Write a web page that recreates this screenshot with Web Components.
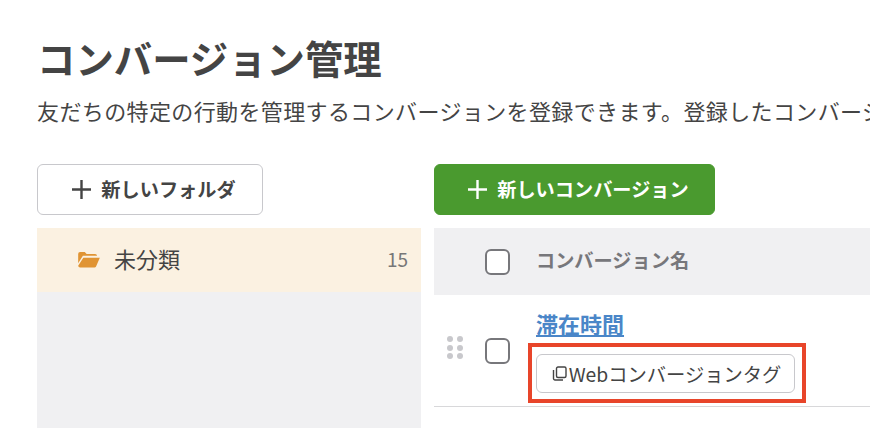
<!DOCTYPE html>
<html lang="ja">
<head>
<meta charset="utf-8">
<style>
  html, body { margin: 0; height: 100%; overflow: hidden; background: #fff; }
  body { font-family: "Noto Sans CJK JP", "Noto Sans", sans-serif; color: #444; }
</style>
</head>
<body>
<conv-page>
  <page-head slot="head" heading="コンバージョン管理">友だちの特定の行動を管理するコンバージョンを登録できます。登録したコンバージョンは友だちの行動の分析に利用できます。</page-head>
  <folder-panel slot="left"></folder-panel>
  <conv-panel slot="right"></conv-panel>
</conv-page>

<script>
class ConvPage extends HTMLElement {
  constructor() {
    super();
    this.attachShadow({ mode: 'open' });
    this.shadowRoot.innerHTML = `
      <style>
        :host { display: block; width: 870px; height: 428px; overflow: hidden; box-sizing: border-box; padding: 32px 0 0 37px; }
        .cols { display: flex; gap: 13px; margin-top: 41px; width: 900px; }
        .left { flex: 0 0 384px; }
        .right { flex: 1 1 auto; }
      </style>
      <slot name="head"></slot>
      <div class="cols">
        <div class="left"><slot name="left"></slot></div>
        <div class="right"><slot name="right"></slot></div>
      </div>`;
  }
}

class PageHead extends HTMLElement {
  constructor() {
    super();
    this.attachShadow({ mode: 'open' });
    this.shadowRoot.innerHTML = `
      <style>
        :host { display: block; }
        h1 { margin: 0; font-size: 38.4px; line-height: 50px; font-weight: 700; color: #444; white-space: nowrap; }
        p { margin: 15px 0 0; font-size: 22px; line-height: 26px; letter-spacing: 0.38px; color: #444; white-space: nowrap; }
      </style>
      <h1>${this.getAttribute('heading')}</h1>
      <p><slot></slot></p>`;
  }
}

class PlusButton extends HTMLElement {
  constructor() {
    super();
    this.attachShadow({ mode: 'open' });
    this.shadowRoot.innerHTML = `
      <style>
        :host { display: block; box-sizing: border-box; height: 51px; border-radius: 6px; border: 1px solid #c8c8cc; background: #fff; color: #444; }
        :host([primary]) { border-color: #4a9a2f; background: #4a9a2f; color: #fff; }
        .in { box-sizing: border-box; height: 100%; padding-left: 8px; display: flex; align-items: center; justify-content: center; gap: 10px; font-size: 19.2px; font-weight: 700; }
        span { margin-bottom: 2px; }
        svg { width: 19px; height: 19px; display: block; }
      </style>
      <div class="in">
        <svg viewBox="0 0 19 19"><path d="M9.5 0v19M0 9.5h19" stroke="currentColor" stroke-width="2.4" fill="none"/></svg>
        <span><slot></slot></span>
      </div>`;
  }
}

class FolderPanel extends HTMLElement {
  constructor() {
    super();
    this.attachShadow({ mode: 'open' });
    this.shadowRoot.innerHTML = `
      <style>
        :host { display: block; }
        plus-button { width: 226px; }
        .list { margin-top: 13px; height: 220px; background: #f0f0f2; }
        .row { height: 64px; display: flex; align-items: center; padding: 0 13px 0 41px; background: #fbf1e1; }
        svg { width: 22px; height: 16px; display: block; margin-right: 14px; }
        .name { flex: 1; font-size: 22px; color: #444; margin-bottom: 4px; }
        .count { font-size: 19px; color: #777; margin-bottom: 4px; }
      </style>
      <plus-button>新しいフォルダ</plus-button>
      <div class="list">
        <div class="row">
          <svg viewBox="0 0 23 17"><path d="M0 2a2 2 0 0 1 2-2h5l2 2h9a2 2 0 0 1 2 2H5L0 12z" fill="#e09433"/><path d="M5.5 6H23l-4 9.5a2 2 0 0 1-1.6 1H2a2 2 0 0 1-2-1.8z" fill="#e09433"/></svg>
          <span class="name">未分類</span>
          <span class="count">15</span>
        </div>
      </div>`;
  }
}

class CheckBox extends HTMLElement {
  constructor() {
    super();
    this.attachShadow({ mode: 'open' });
    this.shadowRoot.innerHTML = `
      <style>
        :host { display: block; box-sizing: border-box; flex: none; width: 25px; height: 26px; border: 2px solid #77777b; border-radius: 6px; background: #fff; }
      </style>`;
  }
}

class ConvPanel extends HTMLElement {
  constructor() {
    super();
    this.attachShadow({ mode: 'open' });
    this.shadowRoot.innerHTML = `
      <style>
        :host { display: block; }
        plus-button { width: 281px; }
        .head { margin-top: 13px; height: 67px; display: flex; align-items: center; padding-left: 51px; gap: 26px; background: #f0f0f2; font-size: 19.2px; font-weight: 700; color: #77777b; }
        .head span { margin-bottom: 4px; }
        .row { position: relative; height: 112px; box-sizing: border-box; border-bottom: 1px solid #d8d8da; display: flex; padding-left: 13px; }
        .grip { width: 16px; margin-top: 41px; display: grid; grid-template-columns: 6px 6px; gap: 2.5px 4px; align-content: start; }
        .grip i { width: 6px; height: 6px; border-radius: 50%; background: #c8c8cc; }
        .row check-box { margin: 43px 0 0 22px; }
        .main { margin-left: 26px; padding-top: 13px; }
        a { display: block; font-size: 22px; line-height: 30px; font-weight: 700; color: #4a86c8; text-decoration: underline; }
        .tag { margin-top: 16px; box-sizing: border-box; width: 259px; height: 39px; padding-left: 2px; border: 1px solid #c8c8cc; border-radius: 6px; display: flex; align-items: center; justify-content: center; font-size: 19.3px; color: #444; }
        .tag svg { width: 15px; height: 15px; margin-right: 2px; display: block; }
        .mark { position: absolute; left: 94px; top: 48px; width: 278px; height: 60px; box-sizing: border-box; border: 4px solid #e8452a; }
      </style>
      <plus-button primary>新しいコンバージョン</plus-button>
      <div class="head"><check-box></check-box><span>コンバージョン名</span></div>
      <div class="row">
        <div class="grip"><i></i><i></i><i></i><i></i><i></i><i></i></div>
        <check-box></check-box>
        <div class="main">
          <a>滞在時間</a>
          <div class="tag">
            <svg viewBox="0 0 15 15" fill="none" stroke="#444" stroke-width="1.4"><rect x="4.5" y="1" width="9.5" height="10.5" rx="1.5"/><path d="M1.5 4v8.5a1.5 1.5 0 0 0 1.5 1.5h8"/></svg>
            <span>Webコンバージョンタグ</span>
          </div>
        </div>
        <div class="mark"></div>
      </div>`;
  }
}

customElements.define('plus-button', PlusButton);
customElements.define('check-box', CheckBox);
customElements.define('page-head', PageHead);
customElements.define('folder-panel', FolderPanel);
customElements.define('conv-panel', ConvPanel);
customElements.define('conv-page', ConvPage);
</script>
</body>
</html>
